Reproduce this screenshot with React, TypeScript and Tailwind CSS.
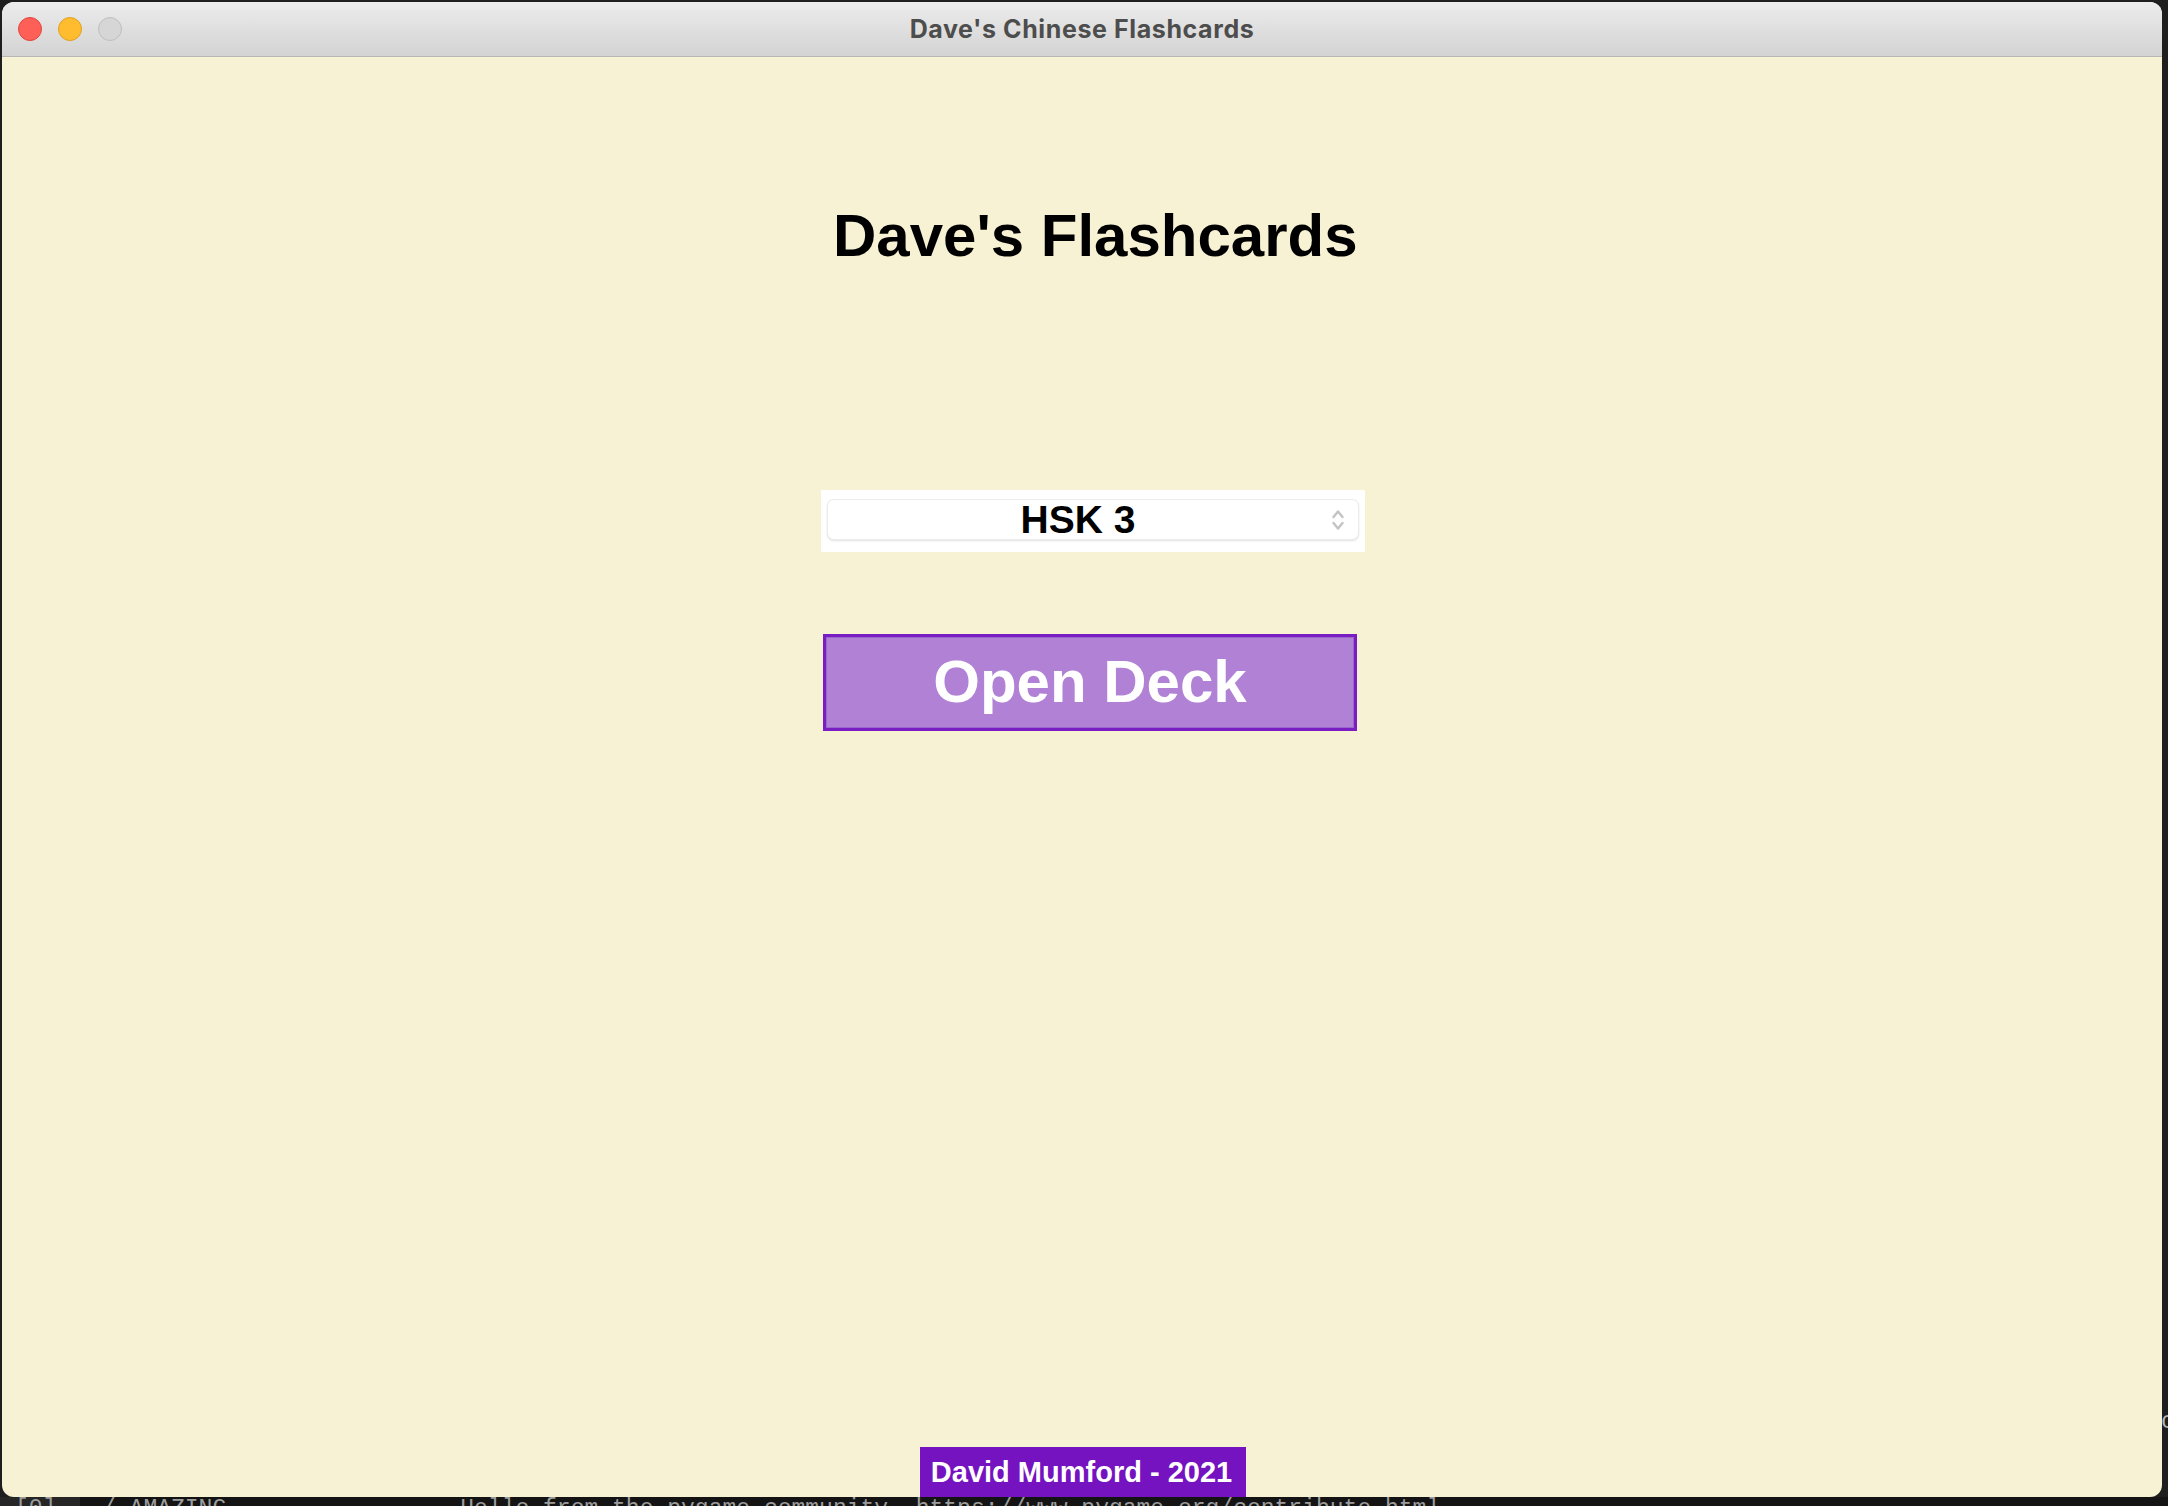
import React from "react";

function Chevrons() {
  return (
    <svg width="16" height="28" viewBox="0 0 16 28" fill="none">
      <path d="M3.5 11 L8 5.5 L12.5 11" stroke="#c4c4c4" strokeWidth="2.5" strokeLinecap="round" strokeLinejoin="round" />
      <path d="M3.5 17 L8 22.5 L12.5 17" stroke="#c4c4c4" strokeWidth="2.5" strokeLinecap="round" strokeLinejoin="round" />
    </svg>
  );
}

export default function App() {
  return (
    <div className="w-[2168px] h-[1506px] bg-[#1e1e1e] flex flex-col overflow-hidden">
      <div className="flex h-[1497px] pt-[2px] pl-[2px]">
        <div className="w-[2160px] h-[1495px] rounded-[12px] overflow-hidden bg-[#f7f2d3] flex flex-col">
          {/* Title bar */}
          <div className="h-[55px] shrink-0 bg-gradient-to-b from-[#ececec] to-[#d3d3d3] border-b border-[#b6b6b6] grid grid-cols-[1fr_auto_1fr] items-center">
            <div className="flex items-center gap-[16px] pl-[16px]">
              <div className="w-[24px] h-[24px] rounded-full bg-[#fe5f57] border border-[#e1463f]" />
              <div className="w-[24px] h-[24px] rounded-full bg-[#febc2e] border border-[#dfa125]" />
              <div className="w-[24px] h-[24px] rounded-full bg-[#d6d6d6] border border-[#bfbfbf]" />
            </div>
            <div
              className="text-[25px] font-bold text-[#4d4d4d] leading-none tracking-[0.6px]"
              style={{ fontFamily: "Inter, 'Liberation Sans', sans-serif" }}
            >
              Dave's Chinese Flashcards
            </div>
            <div />
          </div>

          {/* Content */}
          <div
            className="flex-1 flex flex-col"
            style={{ fontFamily: "'Liberation Sans', Arial, sans-serif" }}
          >
            <div className="flex flex-col items-start pl-[819px]">
              <h1 className="mt-[149px] ml-[12px] text-[60px] leading-none font-bold text-black">
                Dave's Flashcards
              </h1>

              <div className="mt-[224px] w-[544px] h-[62px] bg-white pt-[9px] pb-[12px] px-[6px]">
                <div className="h-full rounded-[7px] bg-white border border-[#ececec] shadow-[0_1px_2px_rgba(0,0,0,0.12)] flex items-center relative">
                  <div className="flex-1 text-center pr-[30px] text-[39px] leading-none font-bold text-black">
                    HSK 3
                  </div>
                  <div className="absolute right-[12px] top-1/2 -translate-y-1/2 flex">
                    <Chevrons />
                  </div>
                </div>
              </div>

              <div className="mt-[82px] ml-[2px] w-[534px] h-[97px] bg-[#b081d5] border-[3px] border-[#7a1dc3] shadow-[inset_0_0_0_1px_#9b67cd] flex items-center justify-center">
                <span className="text-[60px] leading-none font-bold text-white mt-[-2px]">Open Deck</span>
              </div>
            </div>

            <div className="mt-auto self-center flex justify-center ml-[2px]">
              <div className="w-[326px] h-[50px] bg-[#7413bf] flex items-center justify-center pr-[3px]">
                <span className="text-[29px] leading-none font-bold text-white">David Mumford - 2021</span>
              </div>
            </div>
          </div>
        </div>
        <div className="w-[6px] overflow-hidden pt-[1408px]">
          <span
            className="text-[23px] leading-none text-[#b5b5b5] ml-[-1px]"
            style={{ fontFamily: "'Liberation Mono', monospace" }}
          >
            c
          </span>
        </div>
      </div>

      {/* terminal strip below */}
      <div
        className="h-[9px] bg-[#141414] flex overflow-hidden text-[23px] leading-[23px] text-[#9c9c9c] whitespace-pre"
        style={{ fontFamily: "'Liberation Mono', monospace" }}
      >
        <div className="w-[80px] bg-[#262626] pl-[15px] pt-[1px]">[0]</div>
        <div className="pl-[22px] pt-[1px]">/ AMAZING</div>
        <div className="pl-[234px] pt-[1px]">Hello from the pygame community. https://www.pygame.org/contribute.html</div>
      </div>
    </div>
  );
}
